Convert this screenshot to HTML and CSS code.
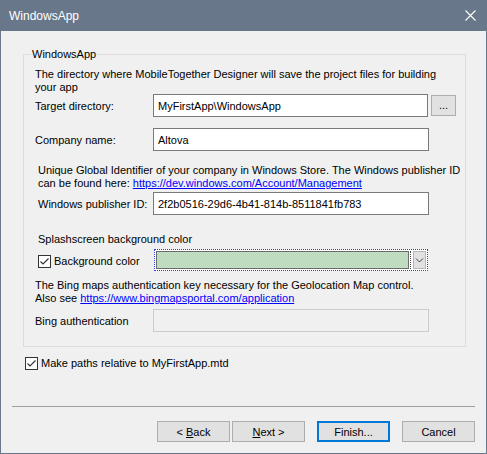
FILE: index.html
```html
<!DOCTYPE html>
<html>
<head>
<meta charset="utf-8">
<title>WindowsApp</title>
<link rel="stylesheet" href="styles.css">
</head>
<body>
<div class="window">
  <div class="titlebar">
    <span class="title">WindowsApp</span>
    <svg class="close" width="11" height="11" viewBox="0 0 11 11"><path d="M0.5 0.5L10.5 10.5M10.5 0.5L0.5 10.5" stroke="#ffffff" stroke-width="1.1" fill="none"/></svg>
  </div>
  <div class="main">
    <fieldset class="group">
      <legend>WindowsApp</legend>
      <p class="desc sec first">The directory where MobileTogether Designer will save the project files for building<br>your app</p>
      <div class="row sec">
        <span class="lbl">Target directory:</span>
        <input class="field" type="text" value="MyFirstApp\WindowsApp" readonly>
        <span class="browse">...</span>
      </div>
      <div class="row sec company">
        <span class="lbl">Company name:</span>
        <input class="field" type="text" value="Altova" readonly>
      </div>
      <p class="desc sec2 unique">Unique Global Identifier of your company in Windows Store. The Windows publisher ID<br>can be found here: <a class="link" href="#">https://dev.windows.com/Account/Management</a></p>
      <div class="row sec2 publisher">
        <span class="lbl lbl2">Windows publisher ID:</span>
        <input class="field" type="text" value="2f2b0516-29d6-4b41-814b-8511841fb783" readonly>
      </div>
      <p class="line sec2 splash">Splashscreen background color</p>
      <div class="row combo-row sec2">
        <label class="check cb-label"><span class="box"><svg width="11" height="11" viewBox="0 0 11 11"><path d="M1.5 5.5L4 8L9.5 2.5" stroke="#333333" stroke-width="1.2" fill="none"/></svg></span>Background color</label>
        <div class="combo">
          <span class="swatch"></span>
          <span class="sep"></span>
          <span class="drop"><svg width="9" height="6" viewBox="0 0 9 6"><path d="M1 1.5L4.5 5L8 1.5" stroke="#444444" stroke-width="1" fill="none"/></svg></span>
        </div>
      </div>
      <p class="desc sec bing">The Bing maps authentication key necessary for the Geolocation Map control.<br>Also see <a class="link" href="#">https://www.bingmapsportal.com/application</a></p>
      <div class="row sec bingrow">
        <span class="lbl">Bing authentication</span>
        <input class="field disabled" type="text" value="" disabled>
      </div>
    </fieldset>
    <label class="check relative"><span class="box"><svg width="11" height="11" viewBox="0 0 11 11"><path d="M1.5 5.5L4 8L9.5 2.5" stroke="#333333" stroke-width="1.2" fill="none"/></svg></span>Make paths relative to MyFirstApp.mtd</label>
    <div class="separator"></div>
    <div class="buttons">
      <button class="btn">&lt; <u>B</u>ack</button>
      <button class="btn next"><u>N</u>ext &gt;</button>
      <button class="btn default">Finish...</button>
      <button class="btn cancel">Cancel</button>
    </div>
  </div>
</div>
</body>
</html>
```

FILE: styles.css
```css
* {
  box-sizing: border-box;
}

html, body {
  margin: 0;
  padding: 0;
  background: #f0f0f0;
}

body {
  font-family: "Liberation Sans", Arial, sans-serif;
  font-size: 11px;
  color: #000000;
}

.window {
  width: 487px;
  height: 454px;
  border: 1px solid #687789;
  background: #f0f0f0;
  display: flex;
  flex-direction: column;
}

.titlebar {
  height: 30px;
  background: #687789;
  display: flex;
  align-items: center;
  justify-content: space-between;
  padding: 0 10px 0 8px;
}

.title {
  color: #ffffff;
  font-size: 12px;
  line-height: 14px;
}

.close {
  display: block;
  margin-top: -1px;
}

.main {
  display: flex;
  flex-direction: column;
  padding: 0 11px 0 11px;
}

.group {
  margin: 17px 9px 0 11px;
  padding: 0 9px 14px 7px;
  border: 1px solid #dcdcdc;
  min-width: 0;
}

.group legend {
  padding: 0 1px;
  line-height: 13px;
  font-size: 11px;
}

.desc, .line {
  margin: 0;
  line-height: 13px;
  white-space: nowrap;
}

.sec {
  margin-left: 4px;
}

.sec2 {
  margin-left: 7px;
}

.first {
  margin-top: 7px;
}

.row {
  display: flex;
  align-items: center;
  height: 23px;
}

.lbl {
  width: 118px;
  flex: none;
}

.lbl2 {
  width: 115px;
}

.field {
  width: 276px;
  height: 23px;
  border: 1px solid #7a7a7a;
  background: #ffffff;
  padding: 0 4px;
  font-family: "Liberation Sans", Arial, sans-serif;
  font-size: 11px;
  color: #000000;
  outline: none;
  margin: 0;
}

.field.disabled {
  border-color: #cccccc;
  background: #f0f0f0;
}

.browse {
  margin-left: 3px;
  width: 25px;
  height: 21px;
  border: 1px solid #adadad;
  background: #e1e1e1;
  display: flex;
  align-items: center;
  justify-content: center;
  padding-bottom: 2px;
}

.company {
  margin-top: 11px;
}

.unique {
  margin-top: 13px;
}

.publisher {
  margin-top: 2px;
}

.splash {
  margin-top: 18px;
}

.combo-row {
  margin-top: 3px;
  height: 22px;
}

.check {
  display: flex;
  align-items: center;
  line-height: 13px;
}

.box {
  width: 13px;
  height: 13px;
  border: 1px solid #333333;
  background: #ffffff;
  margin-right: 3px;
  flex: none;
  display: flex;
  align-items: center;
  justify-content: center;
}

.box svg {
  display: block;
}

.cb-label {
  width: 116px;
  flex: none;
  margin-top: 3px;
}

.combo {
  width: 274px;
  height: 22px;
  border: 1px dotted #2a3fd6;
  background: #ffffff;
  padding: 1px 1px 1px 1px;
  display: flex;
  align-items: stretch;
}

.swatch {
  flex: 1;
  border: 1px solid #6d6d6d;
  background: #c0dcc0;
}

.sep {
  width: 1px;
  margin: 0 2px 0 1px;
  border-left: 1px dotted #444444;
}

.drop {
  width: 13px;
  border: 1px solid #b5b5b5;
  background: #e1e1e1;
  display: flex;
  align-items: center;
  justify-content: center;
}

.drop svg {
  display: block;
}

.bing {
  margin-top: 8px;
}

.bingrow {
  margin-top: 4px;
}

.link {
  color: #0000ff;
  text-decoration: underline;
}

.relative {
  margin: 10px 0 0 13px;
  height: 13px;
}

.separator {
  margin-top: 36px;
  height: 1px;
  background: #a0a0a0;
}

.buttons {
  margin-top: 14px;
  display: flex;
  justify-content: flex-end;
}

.btn {
  width: 73px;
  height: 21px;
  border: 1px solid #adadad;
  background: #e1e1e1;
  font-family: "Liberation Sans", Arial, sans-serif;
  font-size: 11px;
  color: #000000;
  padding: 0;
  margin: 0;
}

.next {
  margin-left: 2px;
}

.default {
  margin-left: 12px;
  border: 2px solid #0078d7;
}

.cancel {
  margin-left: 12px;
}
```
